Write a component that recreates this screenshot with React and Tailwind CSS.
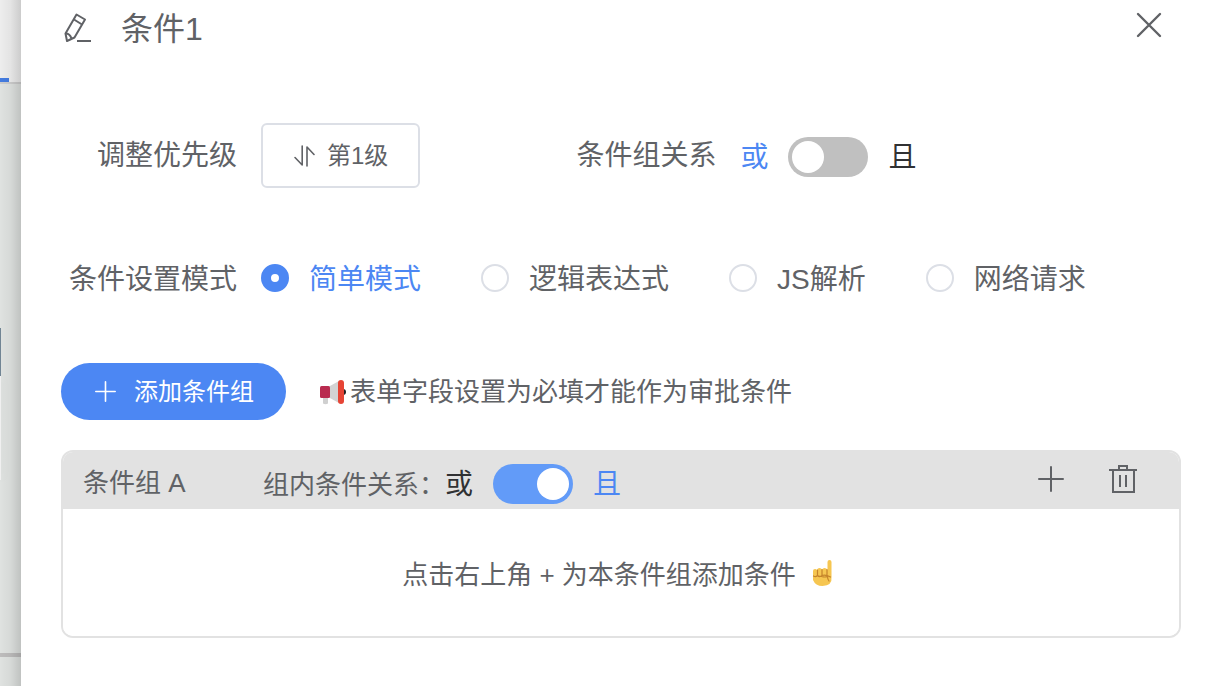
import { useState } from "react";

function Switch({ checked, onChange, label }) {
  return (
    <button
      type="button"
      role="switch"
      aria-checked={checked}
      aria-label={label}
      onClick={() => onChange(!checked)}
      className={`flex h-10 w-20 shrink-0 items-center rounded-full px-1 ${
        checked ? "justify-end bg-[#629bf8]" : "justify-start bg-[#c0c0c0]"
      }`}
    >
      <span className="size-8 rounded-full bg-white" />
    </button>
  );
}

function Relation({ value, onChange, label }) {
  return (
    <div className="flex items-center gap-5 pt-0.5 text-[28px] leading-10">
      <span className={`pt-0.5 ${value ? "text-[#303133]" : "text-[#4c87f3]"}`}>或</span>
      <Switch checked={value} onChange={onChange} label={label} />
      <span className={`pt-0.5 ${value ? "text-[#4c87f3]" : "text-[#303133]"}`}>且</span>
    </div>
  );
}

function EditIcon() {
  return (
    <svg viewBox="0 0 28 30" className="h-[30px] w-7" fill="none" stroke="currentColor" strokeWidth="2" strokeLinejoin="round">
      <path d="M13.500 1.500 22 6.500 11.500 24.500 4 28 2.500 20.500Z" />
      <path d="M11 6.500 19 11.500M2.500 20.500Q7 20.500 8.500 25.500" />
      <path d="M14 28H28" />
    </svg>
  );
}

function CloseIcon() {
  return (
    <svg viewBox="0 0 26 26" className="size-[26px]" fill="none" stroke="currentColor" strokeWidth="2.4" strokeLinecap="round">
      <path d="M2 2 24 24M24 2 2 24" />
    </svg>
  );
}

function SortIcon() {
  return (
    <svg viewBox="0 0 22 22" className="size-[22px]" fill="none" stroke="currentColor" strokeWidth="1.6" strokeLinecap="round" strokeLinejoin="round">
      <path d="M9.200 1V20L2 12.500" />
      <path d="M14 21V2L21 9.500" />
    </svg>
  );
}

function PlusIcon({ className }) {
  return (
    <svg viewBox="0 0 26 26" className={className} fill="none" stroke="currentColor" strokeWidth="2" strokeLinecap="round">
      <path d="M13 1V25M1 13H25" />
    </svg>
  );
}

function TrashIcon() {
  return (
    <svg viewBox="0 0 28 30" className="h-[30px] w-7" fill="none" stroke="currentColor" strokeWidth="2">
      <path d="M0 6H28M4 6V28H25V6M10 6V2H18V6" />
      <path d="M11 11V23M17 11V23" />
    </svg>
  );
}

function Megaphone() {
  return (
    <svg viewBox="0 0 26 26" className="size-[26px]">
      <circle cx="23" cy="13" r="3" fill="#202124" />
      <path d="M3 16H8L8 24.500Q5.500 26 3 24.500Z" fill="#d0d0d0" />
      <path d="M9 7.500 19 2V24L9 18.500Z" fill="#d3d3d3" />
      <rect x="0" y="7" width="10" height="12" rx="1.500" fill="#b92b50" />
      <rect x="18" y="1" width="6" height="24" rx="3" fill="#e64435" />
    </svg>
  );
}

function PointUp() {
  return (
    <svg viewBox="0 0 22 28" className="h-7 w-[22px]">
      <path d="M15.500 3Q15.500 1 17.500 1T19.500 3V18Q20.500 26.500 10.500 27Q3.500 27 1 21V12Q1 10 3 10Q4.500 10 5 11Q5.500 9 7.500 9Q9.300 9 10 10.500Q10.800 9 12.500 9Q14.500 9 15.500 11Z" fill="#f6c651" />
      <path d="M5.500 11V16M10 10.500V16M15 10.500V15.500M1.500 17Q3.500 18.500 5.500 16.500Q7.500 18.500 10 16.500Q14 15.500 18.500 18M9.500 17.500Q13 18.500 15.500 17.500Q15.500 20 17 22" fill="none" stroke="#c5842b" strokeWidth="1.200" strokeLinecap="round" />
    </svg>
  );
}

const MODES = ["简单模式", "逻辑表达式", "JS解析", "网络请求"];

export default function App() {
  const [mode, setMode] = useState(MODES[0]);
  const [groupsAnd, setGroupsAnd] = useState(false);
  const [innerAnd, setInnerAnd] = useState(true);

  return (
    <div lang="zh-CN" className="flex min-h-screen bg-[#dfe2e0] font-['Liberation_Sans','Noto_Sans_CJK_SC',sans-serif] text-[#606266]">
      <aside className="relative flex w-[21px] shrink-0 flex-col">
        <div className="flex h-[84px] items-end border-b-2 border-[#cdcdcd] bg-[#ededed]">
          <span className="h-1 w-[9px] bg-[#447ce0]" />
        </div>
        <div className="flex flex-1 flex-col pt-[244px]">
          <span className="h-12 w-px bg-[#718594]" />
          <span className="h-[104px] w-px bg-[#f0f0f0] shadow-[0_0_12px_#0002]" />
        </div>
        <div className="h-[33px] border-t-4 border-[#bdbcbc]" />
        <div className="absolute inset-0 bg-linear-to-r from-transparent via-black/4 to-black/14" />
      </aside>

      <main className="min-w-0 flex-1 bg-white pr-[26px] pl-10">
        <header className="flex h-14 items-center">
          <button type="button" aria-label="编辑名称" className="mr-[30px] ml-0.5">
            <EditIcon />
          </button>
          <h1 className="pt-0.5 text-[32px] leading-10">条件1</h1>
          <button type="button" aria-label="关闭" className="mr-[19px] mb-1.5 ml-auto">
            <CloseIcon />
          </button>
        </header>

        <div className="mt-[67px] flex items-center pl-9">
          <span className="mr-6 text-[28px] leading-10">调整优先级</span>
          <button type="button" className="flex h-[65px] items-center gap-3 rounded-md border-2 border-[#dcdfe6] px-[30px] text-2xl">
            <SortIcon />
            第1级
          </button>
          <span className="mr-6 ml-[156px] text-[28px] leading-10">条件组关系</span>
          <Relation value={groupsAnd} onChange={setGroupsAnd} label="条件组关系" />
        </div>

        <fieldset className="mt-[68px] flex items-center pl-2 text-[28px] leading-10" aria-labelledby="mode-label">
          <span id="mode-label" className="mr-6 pt-1">条件设置模式</span>
          <div className="flex gap-[60px]">
            {MODES.map((m) => (
              <label key={m} className={`flex items-center gap-5 ${mode === m ? "text-[#4c87f3]" : ""}`}>
                <input
                  type="radio"
                  name="mode"
                  value={m}
                  checked={mode === m}
                  onChange={() => setMode(m)}
                  className="size-7 appearance-none rounded-full border-2 border-[#dcdfe6] bg-white checked:border-10 checked:border-[#4c87f3]"
                />
                <span className="pt-1">{m}</span>
              </label>
            ))}
          </div>
        </fieldset>

        <div className="mt-[63px] flex items-center">
          <button type="button" className="mr-[34px] flex h-[57px] items-center gap-[18px] rounded-full bg-[#4c87f3] px-8 pl-[34px] text-2xl text-white">
            <PlusIcon className="size-[21px]" />
            添加条件组
          </button>
          <p className="flex items-center gap-1 text-[26px] leading-10">
            <Megaphone />
            表单字段设置为必填才能作为审批条件
          </p>
        </div>

        <section className="mt-[30px] overflow-hidden rounded-xl border-2 border-[#e2e2e2] text-[26px] leading-10">
          <div className="flex h-[57px] items-center bg-[#e2e2e2] pr-[42px] pl-5">
            <h2 className="w-[180px] pt-1">条件组 A</h2>
            <div className="flex items-center pt-1">
              <span className="pt-1">组内条件关系：</span>
              <Relation value={innerAnd} onChange={setInnerAnd} label="组内条件关系" />
            </div>
            <div className="ml-auto flex items-center gap-[45px] pb-1">
              <button type="button" aria-label="添加条件">
                <PlusIcon className="size-[26px]" />
              </button>
              <button type="button" aria-label="删除条件组">
                <TrashIcon />
              </button>
            </div>
          </div>
          <p className="flex h-[127px] items-center justify-center gap-4 bg-white pr-1.5">
            <span className="pt-1">点击右上角 + 为本条件组添加条件</span>
            <PointUp />
          </p>
        </section>
      </main>
    </div>
  );
}
